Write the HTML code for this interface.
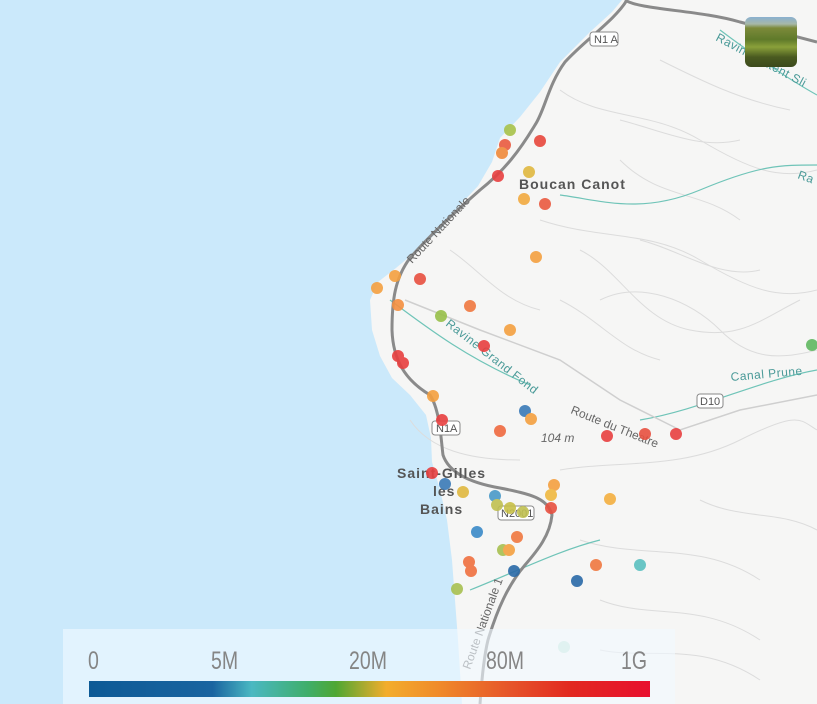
<!DOCTYPE html>
<html><head><meta charset="utf-8"><style>
html,body{margin:0;padding:0;width:817px;height:704px;overflow:hidden;background:#cbe9fb;font-family:"Liberation Sans",sans-serif}
svg{position:absolute;left:0;top:0}
.lg{position:absolute;left:63px;top:629px;width:612px;height:75px;background:rgba(240,248,255,0.62)}
.lb{position:absolute;top:647px;font-size:25px;color:#858585;transform:scaleX(0.78);transform-origin:left top}
.bar{position:absolute;left:89px;top:681px;width:561px;height:16px;background:linear-gradient(90deg,#0d5a96 0%,#1a64a0 22%,#4ab8c2 29%,#3fae6a 39%,#4ea733 44%,#f3ad2c 53%,#f08c2a 62%,#e6552a 75%,#e22820 86%,#e8102e 100%)}
.th{position:absolute;left:745px;top:17px;width:52px;height:50px;border-radius:6px;overflow:hidden;background:linear-gradient(180deg,#8ab0d0 0%,#a7b8a8 14%,#7c8a3a 22%,#5f7a2a 45%,#8aa03a 60%,#4a5a20 80%,#3c4a1c 100%)}
</style></head><body>
<svg width="817" height="704" viewBox="0 0 817 704">
<path d="M622 0 L817 0 L817 704 L462 704 L458 640 L455 600 L452 560 L447 520 L440 490 L432 462 L431 438 L426 415 L410 395 L392 378 L380 356 L372 330 L370 300 L378 282 L396 268 L420 248 L442 228 L460 205 L478 186 L492 162 L500 138 L520 117 L540 92 L560 62 L590 32 L612 12 Z" fill="#f6f6f5"/>
<g fill="none" stroke="#dcdcdc" stroke-width="1">
<path d="M560 90 C600 120 650 110 700 140 S780 180 817 170"/>
<path d="M540 220 C600 240 650 230 700 260 S780 300 817 290"/>
<path d="M600 300 C640 280 690 300 720 330 S780 360 817 350"/>
<path d="M620 160 C660 200 700 190 740 220"/>
<path d="M560 470 C620 460 680 470 740 440 S800 420 817 430"/>
<path d="M580 540 C640 560 700 540 760 580"/>
<path d="M660 60 C700 80 740 100 790 110"/>
<path d="M600 600 C650 620 700 600 760 640"/>
<path d="M580 250 C620 270 640 320 690 330 S760 320 800 300"/>
<path d="M560 300 C600 320 620 350 660 360"/>
<path d="M620 120 C660 130 700 150 740 140"/>
<path d="M640 240 C680 250 720 280 760 270"/>
<path d="M600 650 C650 660 700 640 760 680"/>
<path d="M700 500 C740 520 780 510 817 530"/>
<path d="M450 250 C480 270 500 300 540 310"/>
<path d="M410 420 C430 450 470 460 520 460"/>
</g>
<g fill="none" stroke="#6fc4b8" stroke-width="1.2">
<path d="M720 30 C760 60 790 80 817 95"/>
<path d="M560 195 C600 200 640 215 700 190 S780 165 817 165"/>
<path d="M390 300 C430 330 470 360 530 385"/>
<path d="M640 420 C700 410 760 380 817 370"/>
<path d="M470 590 C520 570 560 550 600 540"/>
</g>
<path d="M625 0 C640 10 700 10 740 22 L817 42 M627 0 C615 20 585 40 565 62 C548 85 545 110 535 125 C520 150 505 170 480 190 C455 212 430 235 410 258 C395 278 392 300 392 330 C393 360 405 380 430 395 C440 410 441 440 443 455 C448 470 465 482 500 488 C530 494 548 498 552 515 C550 535 538 550 525 565 C508 585 497 610 488 640 C483 660 481 690 480 704" fill="none" stroke="#8a8a8a" stroke-width="3"/>
<path d="M405 300 L480 330 L560 360 L620 400 L680 430 L740 410 L817 395" fill="none" stroke="#cfcfcf" stroke-width="1.5"/>
<g font-family="Liberation Sans,sans-serif" font-size="11" fill="#555">
<rect x="590" y="32" width="28" height="14" rx="3" fill="#fff" stroke="#888"/><text x="594" y="43">N1 A</text>
<rect x="432" y="421" width="28" height="14" rx="3" fill="#fff" stroke="#888"/><text x="436" y="432">N1A</text>
<rect x="498" y="506" width="36" height="14" rx="3" fill="#fff" stroke="#888"/><text x="501" y="517">N2001</text>
<rect x="697" y="394" width="26" height="14" rx="3" fill="#fff" stroke="#888"/><text x="700" y="405">D10</text>
</g>
<g font-family="Liberation Sans,sans-serif" font-weight="bold" font-size="14" fill="#555" letter-spacing="1">
<text x="519" y="189">Boucan Canot</text>
<text x="397" y="478">Saint-Gilles</text>
<text x="433" y="496">les</text>
<text x="420" y="514">Bains</text>
</g>
<g font-family="Liberation Sans,sans-serif" font-size="12" fill="#4a9a98" letter-spacing="0.5">
<text transform="translate(715 40) rotate(28)">Ravine Patent Sli</text>
<text x="797" y="178" transform="rotate(20 797 178)">Ra</text>
<text transform="translate(445 325) rotate(38)">Ravine Grand Fond</text>
<text transform="translate(731 381) rotate(-5)">Canal Prune</text>
</g>
<g font-family="Liberation Sans,sans-serif" font-size="12" fill="#666">
<text transform="translate(412 264) rotate(-47)">Route Nationale</text>
<text transform="translate(570 413) rotate(22)">Route du Theatre</text>
<text x="541" y="442" font-style="italic">104 m</text>
<text transform="translate(470 670) rotate(-70)">Route Nationale 1</text>
</g>
<g opacity="0.9">
<circle cx="510" cy="130" r="6" fill="#a8c24a"/><circle cx="540" cy="141" r="6" fill="#e8483c"/>
<circle cx="505" cy="145" r="6" fill="#ea5a40"/><circle cx="502" cy="153" r="6" fill="#f08a3a"/>
<circle cx="498" cy="176" r="6" fill="#e84040"/><circle cx="529" cy="172" r="6" fill="#e0b840"/>
<circle cx="524" cy="199" r="6" fill="#f2aa40"/><circle cx="545" cy="204" r="6" fill="#ea5a40"/>
<circle cx="536" cy="257" r="6" fill="#f4a040"/><circle cx="395" cy="276" r="6" fill="#f4a040"/>
<circle cx="420" cy="279" r="6" fill="#e85040"/><circle cx="377" cy="288" r="6" fill="#f4a040"/>
<circle cx="398" cy="305" r="6" fill="#f49040"/><circle cx="470" cy="306" r="6" fill="#f07840"/>
<circle cx="441" cy="316" r="6" fill="#98c04a"/><circle cx="510" cy="330" r="6" fill="#f4a040"/>
<circle cx="484" cy="346" r="6" fill="#e84040"/><circle cx="398" cy="356" r="6" fill="#e84040"/>
<circle cx="403" cy="363" r="6" fill="#e84040"/><circle cx="433" cy="396" r="6" fill="#f4a040"/>
<circle cx="525" cy="411" r="6" fill="#3a7ab8"/><circle cx="531" cy="419" r="6" fill="#f4a040"/>
<circle cx="442" cy="420" r="6" fill="#e84040"/><circle cx="500" cy="431" r="6" fill="#f06a40"/>
<circle cx="607" cy="436" r="6" fill="#e84040"/><circle cx="645" cy="434" r="6" fill="#e85040"/>
<circle cx="676" cy="434" r="6" fill="#e84040"/><circle cx="432" cy="473" r="6" fill="#e84040"/>
<circle cx="445" cy="484" r="6" fill="#3a7ab8"/><circle cx="463" cy="492" r="6" fill="#e0b840"/>
<circle cx="495" cy="496" r="6" fill="#4a9ac8"/><circle cx="554" cy="485" r="6" fill="#f4a040"/>
<circle cx="551" cy="495" r="6" fill="#f0b840"/><circle cx="610" cy="499" r="6" fill="#f4b040"/>
<circle cx="497" cy="505" r="6" fill="#c0c050"/><circle cx="510" cy="508" r="6" fill="#c8c048"/>
<circle cx="523" cy="512" r="6" fill="#c0c050"/><circle cx="551" cy="508" r="6" fill="#e85040"/>
<circle cx="477" cy="532" r="6" fill="#3a8ac8"/><circle cx="517" cy="537" r="6" fill="#f07840"/>
<circle cx="503" cy="550" r="6" fill="#a8c050"/><circle cx="509" cy="550" r="6" fill="#f4a040"/>
<circle cx="469" cy="562" r="6" fill="#f07040"/><circle cx="471" cy="571" r="6" fill="#f07040"/>
<circle cx="596" cy="565" r="6" fill="#f07840"/><circle cx="640" cy="565" r="6" fill="#5ac0c0"/>
<circle cx="514" cy="571" r="6" fill="#2a6aa8"/><circle cx="577" cy="581" r="6" fill="#2a6aa8"/>
<circle cx="457" cy="589" r="6" fill="#a8c050"/><circle cx="812" cy="345" r="6" fill="#60b860"/>
<circle cx="564" cy="647" r="6" fill="#bfe6d6"/>
</g>
</svg>
<div class="th"></div>
<div class="lg"></div>
<div class="lb" style="left:88px">0</div>
<div class="lb" style="left:211px">5M</div>
<div class="lb" style="left:349px">20M</div>
<div class="lb" style="left:486px">80M</div>
<div class="lb" style="left:621px">1G</div>
<div class="bar"></div>
</body></html>
